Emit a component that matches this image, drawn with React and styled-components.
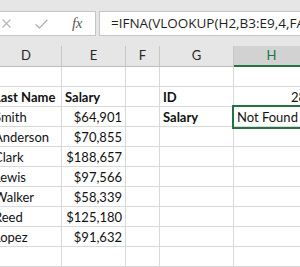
import React from 'react';
import styled, { createGlobalStyle } from 'styled-components';

const GlobalStyle = createGlobalStyle`
  html, body { margin: 0; padding: 0; background: #ffffff; }
  body { overflow: hidden; font-family: Lato, "Liberation Sans", sans-serif; }
`;

const Page = styled.div`
  width: 300px;
  height: 267px;
  overflow: hidden;
  background: #ffffff;
`;

const FormulaBar = styled.div`
  box-sizing: border-box;
  height: 46px;
  width: 340px;
  margin-left: -4px;
  padding-top: 11px;
  background: #e6e6e6;
  display: flex;
  align-items: flex-start;
  gap: 3px;
`;

const NameBox = styled.div`
  box-sizing: border-box;
  width: 100px;
  height: 25px;
  flex: none;
  background: #ffffff;
  border: 1px solid #c6c6c6;
  display: flex;
  align-items: center;
  padding-left: 5px;
  gap: 24px;
`;

const Fx = styled.span`
  font-family: "Liberation Serif", serif;
  font-style: italic;
  font-size: 15px;
  color: #5a5a5a;
  line-height: 1;
  letter-spacing: -0.5px;
`;

const FormulaInput = styled.div`
  box-sizing: border-box;
  flex: 1;
  height: 25px;
  background: #ffffff;
  border: 1px solid #c6c6c6;
  padding-left: 11px;
  font-family: "Open Sans", sans-serif;
  font-size: 13.5px;
  line-height: 23px;
  color: #1f1f1f;
  white-space: nowrap;
  overflow: hidden;
`;

const Grid = styled.div`
  display: grid;
  grid-template-columns: 71px 64px 34px 74px 76px;
  margin-left: -9px;
  width: 319px;
`;

const HeaderCell = styled.div`
  box-sizing: border-box;
  height: 21px;
  background: ${(p) => (p.$selected ? '#d2d2d2' : '#e6e6e6')};
  color: ${(p) => (p.$selected ? '#217346' : '#262626')};
  border-right: 1px solid #c6c6c6;
  border-bottom: 1px solid ${(p) => (p.$selected ? '#217346' : '#bdbdbd')};
  box-shadow: ${(p) => (p.$selected ? 'inset 0 -1px 0 #217346' : 'none')};
  font-size: 13px;
  line-height: 19px;
  text-align: center;
`;

const Cell = styled.div`
  box-sizing: border-box;
  height: 20px;
  border-right: 1px solid #d9d9d9;
  border-bottom: 1px solid #d9d9d9;
  padding: 0 3px 1px;
  display: flex;
  align-items: flex-end;
  justify-content: ${(p) => (p.$align === 'right' ? 'flex-end' : 'flex-start')};
  font-size: 13px;
  line-height: 16px;
  font-weight: ${(p) => (p.$bold ? 700 : 400)};
  color: #111111;
  white-space: nowrap;
  position: relative;
  z-index: ${(p) => (p.$active ? 1 : 0)};
  outline: ${(p) => (p.$active ? '2px solid #217346' : 'none')};
`;

const CrossIcon = () => (
  <svg width="9" height="9" viewBox="0 0 9 9">
    <path d="M0.5 0.5 L8.5 8.5 M8.5 0.5 L0.5 8.5" stroke="#b4b4b4" strokeWidth="1.1" fill="none" />
  </svg>
);

const CheckIcon = () => (
  <svg width="13" height="10" viewBox="0 0 13 10">
    <path d="M0.6 5.2 L4.4 9 L12.4 0.8" stroke="#b4b4b4" strokeWidth="1.3" fill="none" />
  </svg>
);

const columns = ['D', 'E', 'F', 'G', 'H'];

const rows = [
  [{}, {}, {}, {}, {}],
  [
    { t: 'Last Name', b: true },
    { t: 'Salary', b: true },
    {},
    { t: 'ID', b: true },
    { t: '28', r: true },
  ],
  [
    { t: 'Smith' },
    { t: '$64,901', r: true },
    {},
    { t: 'Salary', b: true },
    { t: 'Not Found', active: true },
  ],
  [{ t: 'Anderson' }, { t: '$70,855', r: true }, {}, {}, {}],
  [{ t: 'Clark' }, { t: '$188,657', r: true }, {}, {}, {}],
  [{ t: 'Lewis' }, { t: '$97,566', r: true }, {}, {}, {}],
  [{ t: 'Walker' }, { t: '$58,339', r: true }, {}, {}, {}],
  [{ t: 'Reed' }, { t: '$125,180', r: true }, {}, {}, {}],
  [{ t: 'Lopez' }, { t: '$91,632', r: true }, {}, {}, {}],
  [{}, {}, {}, {}, {}],
  [{}, {}, {}, {}, {}],
];

export default function App() {
  return (
    <Page>
      <GlobalStyle />
      <FormulaBar>
        <NameBox>
          <CrossIcon />
          <CheckIcon />
          <Fx>fx</Fx>
        </NameBox>
        <FormulaInput>=IFNA(VLOOKUP(H2,B3:E9,4,FALSE),"Not Found")</FormulaInput>
      </FormulaBar>
      <Grid>
        {columns.map((c) => (
          <HeaderCell key={c} $selected={c === 'H'}>
            {c}
          </HeaderCell>
        ))}
        {rows.map((row, ri) =>
          row.map((cell, ci) => (
            <Cell
              key={`${ri}-${ci}`}
              $bold={cell.b}
              $align={cell.r ? 'right' : 'left'}
              $active={cell.active}
            >
              {cell.t || ''}
            </Cell>
          ))
        )}
      </Grid>
    </Page>
  );
}
